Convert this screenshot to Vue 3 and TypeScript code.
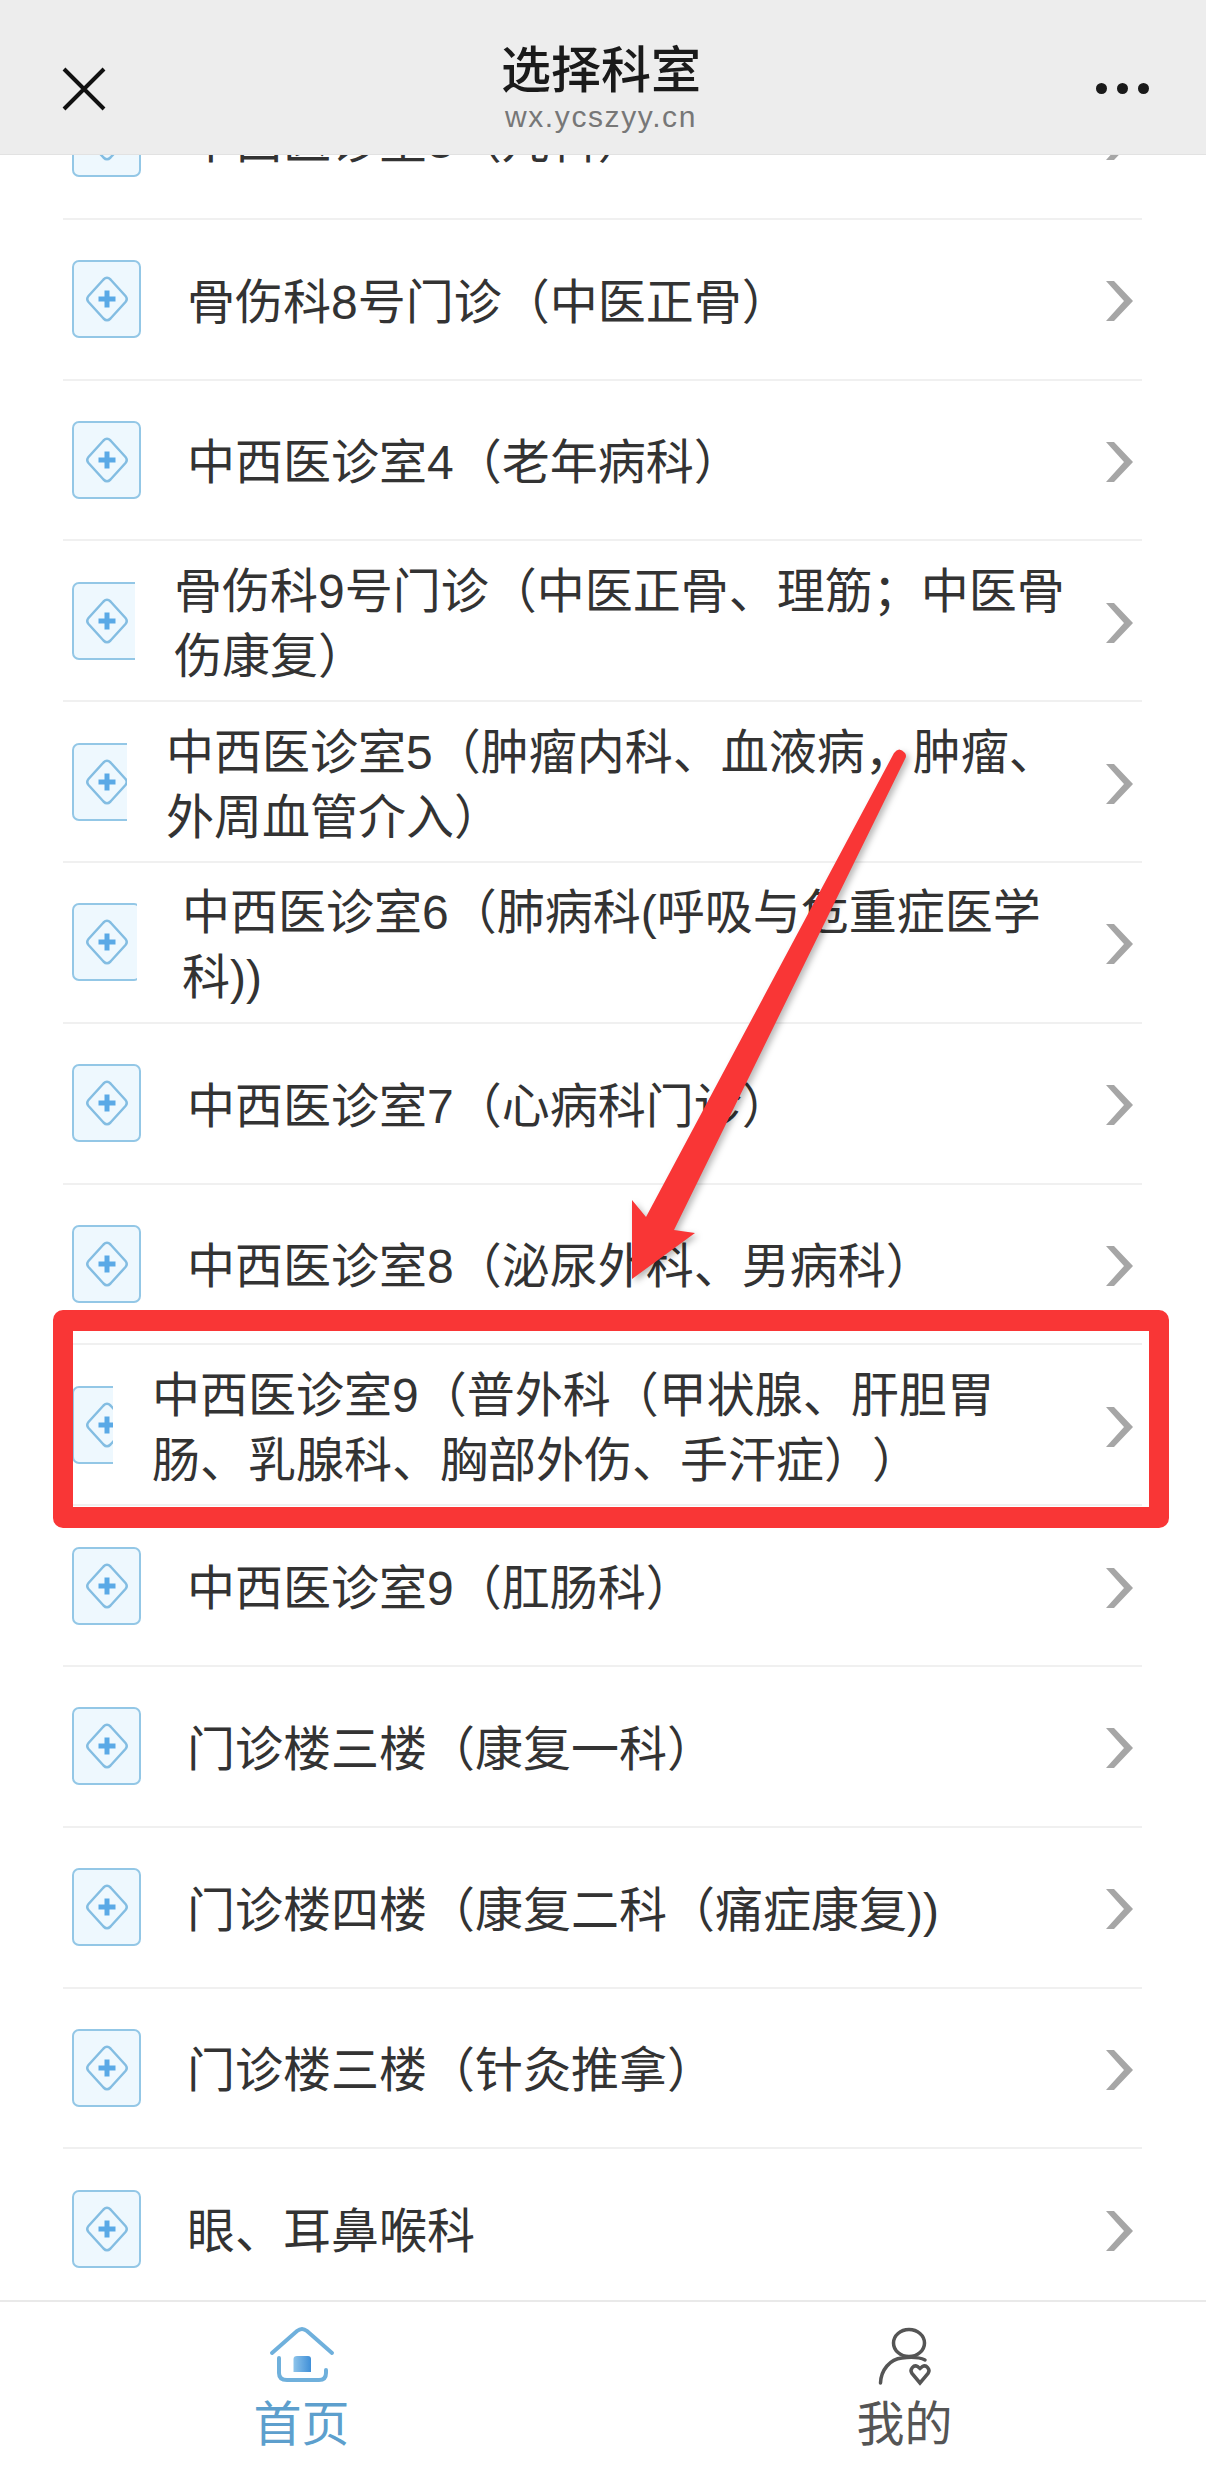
<script setup lang="ts">
interface Dept {
  name: string
  iconWidth: number
  gap: number
}

const depts: Dept[] = [
  { name: '中西医诊室3（儿科）', iconWidth: 69, gap: 46 },
  { name: '骨伤科8号门诊（中医正骨）', iconWidth: 69, gap: 46 },
  { name: '中西医诊室4（老年病科）', iconWidth: 69, gap: 46 },
  { name: '骨伤科9号门诊（中医正骨、理筋；中医骨伤康复）', iconWidth: 63, gap: 39 },
  { name: '中西医诊室5（肿瘤内科、血液病，肿瘤、外周血管介入）', iconWidth: 55, gap: 39 },
  { name: '中西医诊室6（肺病科(呼吸与危重症医学科))', iconWidth: 65, gap: 45 },
  { name: '中西医诊室7（心病科门诊）', iconWidth: 69, gap: 46 },
  { name: '中西医诊室8（泌尿外科、男病科）', iconWidth: 69, gap: 46 },
  { name: '中西医诊室9（普外科（甲状腺、肝胆胃肠、乳腺科、胸部外伤、手汗症））', iconWidth: 41, gap: 39 },
  { name: '中西医诊室9（肛肠科）', iconWidth: 69, gap: 46 },
  { name: '门诊楼三楼（康复一科）', iconWidth: 69, gap: 46 },
  { name: '门诊楼四楼（康复二科（痛症康复))', iconWidth: 69, gap: 46 },
  { name: '门诊楼三楼（针灸推拿）', iconWidth: 69, gap: 46 },
  { name: '眼、耳鼻喉科', iconWidth: 69, gap: 46 },
]
</script>

<template>
  <div class="page">
    <header class="topbar">
      <svg class="close" viewBox="0 0 44 44" aria-hidden="true">
        <path d="M2 2 L42 42 M42 2 L2 42" />
      </svg>
      <div class="heading">
        <div class="title">选择科室</div>
        <div class="domain">wx.ycszyy.cn</div>
      </div>
      <div class="dots"><i></i><i></i><i></i></div>
    </header>

    <main class="viewport">
      <ul class="list">
        <li v-for="d in depts" :key="d.name" class="row">
          <div class="icon" :style="{ width: d.iconWidth + 'px' }">
            <div class="icon-box">
              <svg viewBox="0 0 44 48" width="44" height="48" aria-hidden="true">
                <path class="diamond" d="M18.5 4.5 Q22 1 25.5 4.5 L40.5 21 Q43 24 40.5 27 L25.5 43.5 Q22 47 18.5 43.5 L3.500 27 Q1 24 3.500 21 Z" />
                <path class="plus" d="M22 15.500 V32.500 M13.500 24 H30.500" />
              </svg>
            </div>
          </div>
          <div class="name" :style="{ marginLeft: d.gap + 'px' }">{{ d.name }}</div>
          <svg class="chevron" viewBox="0 0 27 40" aria-hidden="true">
            <path d="M0 0 H8 L27 20 L8 40 H0 L18 20 Z" />
          </svg>
        </li>
      </ul>
    </main>

    <nav class="tabbar">
      <div class="tab active">
        <div class="tab-icon">
          <svg width="64" height="54" viewBox="0 0 64 54" aria-hidden="true">
            <defs>
              <linearGradient id="door" x1="0" y1="0" x2="1" y2="0">
                <stop offset="0" stop-color="#8ec4ea" />
                <stop offset="1" stop-color="#3f8fd8" />
              </linearGradient>
            </defs>
            <path class="home" d="M2 25 L27 3 Q32 -1 37 3 L62 25" />
            <path class="home" d="M9 30 V45 Q9 52 17 52 H49 Q56 52 56 45 V42" />
            <path d="M23.500 44 V31 Q23.500 28 27 28 H38 Q41 28 41 31 V44 Z" fill="url(#door)" />
          </svg>
        </div>
        <span>首页</span>
      </div>
      <div class="tab">
        <div class="tab-icon">
          <svg width="52" height="57" viewBox="0 0 52 57" aria-hidden="true">
            <ellipse class="user" cx="30" cy="15" rx="15.500" ry="13.500" />
            <path class="user" d="M1.500 55 C2 42 11 31 23 30 C31 29 40 29 46 32" />
            <path class="user" d="M41 55 L33 45.500 C30 41 35 36.500 38.500 38.500 L41 40.500 L43.500 38.500 C47 36.500 52 41 49 45.500 Z" />
          </svg>
        </div>
        <span>我的</span>
      </div>
    </nav>

    <div class="highlight"></div>
    <svg class="arrow" viewBox="0 0 1206 2475" aria-hidden="true">
      <path d="M894 753 Q899 746 905 753 Q907 756 905 759 L674 1230 L695 1233 L632 1279 L632 1200 L646 1217 Z" />
    </svg>
  </div>
</template>

<style>
html,
body {
  margin: 0;
  background: #fff;
}
</style>

<style scoped>
.page {
  position: relative;
  width: 1206px;
  height: 2475px;
  display: flex;
  flex-direction: column;
  overflow: hidden;
  background: #fff;
  font-family: "Liberation Sans", "Noto Sans CJK SC", sans-serif;
  color: #333;
  text-spacing-trim: space-all;
}

.topbar {
  flex: 0 0 155px;
  z-index: 1;
  display: flex;
  align-items: flex-start;
  background: #ededed;
  border-bottom: 1px solid #e2e2e2;
  box-sizing: border-box;
}

.close {
  flex: none;
  width: 44px;
  height: 44px;
  margin: 67px 0 0 62px;
}

.close path {
  fill: none;
  stroke: #111;
  stroke-width: 4;
}

.heading {
  flex: 1;
  margin-top: 41px;
  text-align: center;
}

.title {
  font-size: 50px;
  line-height: 60px;
  font-weight: 500;
  color: #1a1a1a;
}

.domain {
  font-size: 30px;
  line-height: 32px;
  letter-spacing: 1.6px;
  color: #777;
}

.dots {
  flex: none;
  display: flex;
  gap: 10px;
  margin: 83px 57px 0 0;
}

.dots i {
  width: 11px;
  height: 11px;
  border-radius: 50%;
  background: #1a1a1a;
}

.viewport {
  flex: 1;
  min-height: 0;
  overflow: hidden;
}

.list {
  list-style: none;
  margin: -96px 64px 0 63px;
  padding: 0;
}

.row {
  box-sizing: border-box;
  height: 160.800px;
  display: flex;
  align-items: center;
  padding: 0 9px 0 9px;
  border-bottom: 2px solid #f0f0f0;
}

.icon {
  flex: none;
  height: 78px;
  overflow: hidden;
}

.icon-box {
  box-sizing: border-box;
  width: 69px;
  height: 78px;
  display: flex;
  align-items: center;
  justify-content: center;
  border: 2px solid #93c7e6;
  border-radius: 7px;
  background: #eef8fe;
}

.diamond {
  fill: none;
  stroke: #83bde2;
  stroke-width: 2.500;
}

.plus {
  fill: none;
  stroke: #5aa9e6;
  stroke-width: 5;
}

.name {
  flex: 1;
  min-width: 0;
  padding-top: 6px;
  font-size: 48px;
  line-height: 65px;
  color: #333;
}

.chevron {
  flex: none;
  width: 27px;
  height: 40px;
  margin: 4px 0 0 26px;
}

.chevron path {
  fill: #a6a6a6;
}

.tabbar {
  flex: 0 0 175px;
  z-index: 1;
  box-sizing: border-box;
  display: flex;
  background: #fff;
  border-top: 2px solid #e9e9e9;
}

.tab {
  flex: 1;
  display: flex;
  flex-direction: column;
  align-items: center;
  padding-top: 26px;
  font-size: 48px;
  line-height: 62px;
  color: #555;
}

.tab.active {
  color: #5d9fcd;
}

.tab-icon {
  height: 57px;
  margin-bottom: 9px;
}

.tab-icon svg {
  display: block;
  overflow: visible;
}

.home {
  fill: none;
  stroke: #6fb0dc;
  stroke-width: 4;
  stroke-linecap: round;
}

.user {
  fill: none;
  stroke: #555;
  stroke-width: 3.500;
  stroke-linecap: round;
}

.highlight {
  position: absolute;
  left: 53px;
  top: 1310px;
  box-sizing: border-box;
  width: 1116px;
  height: 218px;
  border: solid #f93636;
  border-width: 21px 20px;
  border-radius: 10px;
  z-index: 2;
}

.arrow {
  position: absolute;
  inset: 0;
  width: 1206px;
  height: 2475px;
  z-index: 3;
  pointer-events: none;
  filter: drop-shadow(3px 3px 3px rgba(0, 0, 0, 0.28));
}

.arrow path {
  fill: #f93636;
}
</style>
